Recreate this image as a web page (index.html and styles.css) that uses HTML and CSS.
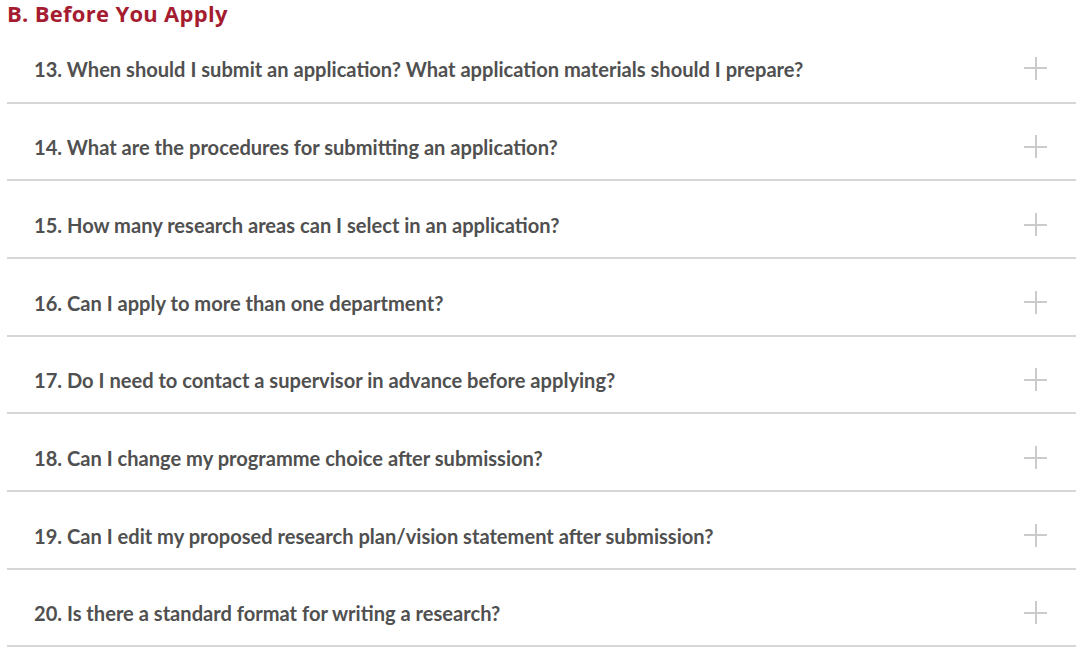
FILE: index.html
```html
<!DOCTYPE html>
<html>
<head>
<meta charset="utf-8">
<link rel="stylesheet" href="styles.css">
</head>
<body>
<main class="faq">
  <h2 class="faq-title">B. Before You Apply</h2>
  <ul class="faq-list">
    <li class="faq-item"><span class="faq-q">13. When should I submit an application? What application materials should I prepare?</span><span class="faq-plus"></span></li>
    <li class="faq-item"><span class="faq-q">14. What are the procedures for submitting an application?</span><span class="faq-plus"></span></li>
    <li class="faq-item"><span class="faq-q">15. How many research areas can I select in an application?</span><span class="faq-plus"></span></li>
    <li class="faq-item"><span class="faq-q">16. Can I apply to more than one department?</span><span class="faq-plus"></span></li>
    <li class="faq-item"><span class="faq-q">17. Do I need to contact a supervisor in advance before applying?</span><span class="faq-plus"></span></li>
    <li class="faq-item"><span class="faq-q">18. Can I change my programme choice after submission?</span><span class="faq-plus"></span></li>
    <li class="faq-item"><span class="faq-q">19. Can I edit my proposed research plan/vision statement after submission?</span><span class="faq-plus"></span></li>
    <li class="faq-item"><span class="faq-q">20. Is there a standard format for writing a research?</span><span class="faq-plus"></span></li>
  </ul>
</main>
</body>
</html>
```
FILE: styles.css
```css
html, body {
  margin: 0;
  padding: 0;
  background: #ffffff;
}
.faq {
  padding: 0 4px 0 7px;
}
.faq-title {
  margin: 0;
  height: 32px;
  font-family: "Open Sans", "Liberation Sans", sans-serif;
  font-weight: 700;
  font-size: 22px;
  letter-spacing: 0.3px;
  line-height: 27px;
  color: #a51c30;
}
.faq-list {
  list-style: none;
  margin: 0;
  padding: 0;
}
.faq-item {
  display: flex;
  align-items: center;
  justify-content: space-between;
  box-sizing: border-box;
  height: 77.7px;
  padding: 12px 29px 0 27px;
  border-bottom: 2px solid #d6d6d6;
}
.faq-item:first-child {
  height: 71.5px;
  padding-top: 4px;
}
.faq-q {
  font-family: Lato, "Liberation Sans", sans-serif;
  font-weight: 700;
  font-size: 20.1px;
  color: #505050;
}
.faq-plus {
  position: relative;
  width: 23px;
  height: 23px;
  flex: none;
  margin-top: -1px;
}
.faq-plus::before,
.faq-plus::after {
  content: "";
  position: absolute;
  background: #cacccc;
}
.faq-plus::before {
  left: 0;
  top: 10.5px;
  width: 23px;
  height: 2px;
}
.faq-plus::after {
  left: 10.5px;
  top: 0;
  width: 2px;
  height: 23px;
}
```
